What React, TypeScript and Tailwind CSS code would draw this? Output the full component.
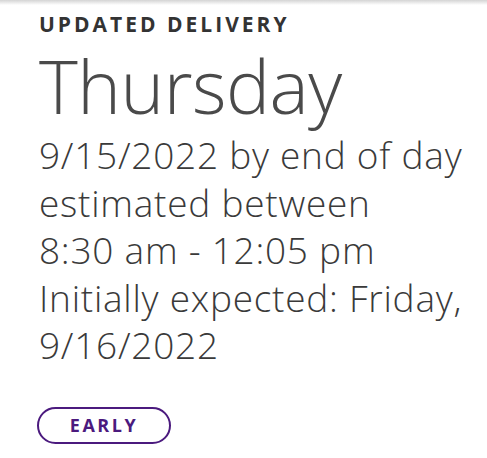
import React from "react";

export default function App() {
  return (
    <div className="w-[487px] h-[458px] bg-white relative overflow-hidden" style={{ fontFamily: '"Open Sans", "Noto Sans", sans-serif' }}>
      <div className="h-[5px] bg-gradient-to-b from-[#d4d4d4] to-white" />
      <div className="pl-[39px] pt-[5px]">
        <div className="text-[21px] leading-[28px] font-bold tracking-[3px] text-[#333333]">UPDATED DELIVERY</div>
        <div className="text-[74px] leading-[86px] font-light text-[#4a4a4a] tracking-[-0.5px] mt-[5px]">Thursday</div>
        <div className="text-[37px] leading-[47.5px] font-light text-[#3a3a3a] tracking-[0.75px] mt-[2px]">
          <div>9/15/2022 by end of day</div>
          <div>estimated between</div>
          <div>8:30 am - 12:05 pm</div>
          <div>Initially expected: Friday,</div>
          <div>9/16/2022</div>
        </div>
        <div className="mt-[38px] ml-[-2px] w-[134px] h-[37px] rounded-full border-2 border-[#4b1a7e] flex items-center justify-center text-[18px] font-bold tracking-[2.5px] text-[#4b1a7e]">
          EARLY
        </div>
      </div>
    </div>
  );
}
